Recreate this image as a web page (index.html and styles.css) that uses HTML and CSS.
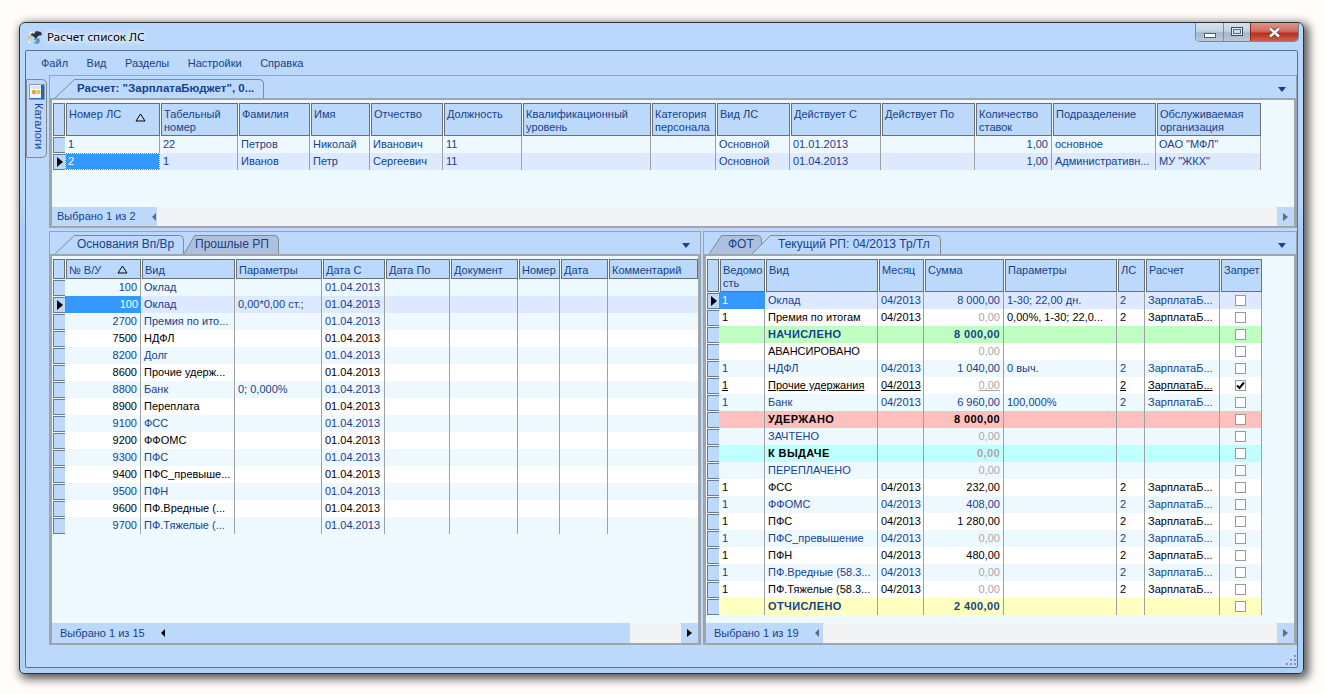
FILE: index.html
```html
<!DOCTYPE html>
<html lang="ru">
<head>
<meta charset="utf-8">
<title>Расчет список ЛС</title>
<link rel="stylesheet" href="styles.css">
</head>
<body>
<div class="window">
  <header class="titlebar">
    <svg class="appicon" width="17" height="16" viewBox="0 0 17 16">
      <path d="M1 8l5-2 1 2-4 2z" fill="#e9c75a"/>
      <path d="M5 3l3 2 2-3 5 1 1 3-4 1-2 3-3-3-2-1z" fill="#2c3440"/>
      <path d="M3 4l2-2 2 2-2 1z" fill="#f3f3f3"/>
      <path d="M8 10l5-1 1 3-2 3-5-1 2-1 2-1-3-1z" fill="#5f8fc4"/>
      <path d="M2 12l3 1-2 2z" fill="#eef4fb"/>
    </svg>
    <span class="wintitle">Расчет список ЛС</span>
    <div class="winbtns">
      <div class="wb wb-min"><i></i></div>
      <div class="wb wb-max"><i></i></div>
      <div class="wb wb-close">
        <svg width="13" height="11" viewBox="0 0 13 11"><path d="M2 1.5l9 8M11 1.5l-9 8" stroke="#4b4b4b" stroke-width="4"/><path d="M2 1.5l9 8M11 1.5l-9 8" stroke="#fff" stroke-width="2.4"/></svg>
      </div>
    </div>
  </header>
  <div class="form">
    <nav class="menu"><span>Файл</span><span>Вид</span><span>Разделы</span><span>Настройки</span><span>Справка</span></nav>
    <div class="work">
      <aside class="side">
        <div class="sidetab">
          <svg width="16" height="16" viewBox="0 0 16 16">
            <rect x=".5" y=".5" width="15" height="15" fill="#2f6fd0" stroke="#7f9fc8"/>
            <rect x="1" y="1" width="11" height="13" fill="#f4f7fb"/>
            <rect x="2" y="2" width="10" height="3" fill="#d9e6f6"/>
            <circle cx="5" cy="8" r="2.2" fill="#f0a030"/>
            <circle cx="9.5" cy="8" r="2.2" fill="#f3c040"/>
            <rect x="12" y="1" width="3" height="14" fill="#2a62c0"/>
          </svg>
          <span class="sidetext">Каталоги</span>
        </div>
      </aside>
      <main class="panes">
        <section class="pane pane-top">
          <div class="tabbar">
            <div class="tab active">
              <svg class="slope" width="20" height="19" viewBox="0 0 20 19"><path d="M0 19L20 0V19z" fill="#bcd9fb"/><path d="M0 19L20 0" stroke="#808a96" fill="none"/></svg>
              <span class="tablabel strong w-calc">Расчет: "ЗарплатаБюджет", 0...</span>
            </div>
            <i class="chev"></i>
          </div>
          <div class="gridbox g1">
            <div class="hrow tall">
              <div class="h"></div>
              <div class="h sort">Номер ЛС<svg class="sortmark" width="11" height="9" viewBox="0 0 11 9"><path d="M5.5 1L1 8h9z" fill="none" stroke="#000"/></svg></div>
              <div class="h">Табельный номер</div><div class="h">Фамилия</div><div class="h">Имя</div><div class="h">Отчество</div><div class="h">Должность</div><div class="h">Квалификационный уровень</div><div class="h">Категория персонала</div><div class="h">Вид ЛС</div><div class="h">Действует С</div><div class="h">Действует По</div><div class="h">Количество ставок</div><div class="h">Подразделение</div><div class="h">Обслуживаемая организация</div>
            </div>
            <div class="row blue"><i class="ind"></i><div class="c">1</div><div class="c">22</div><div class="c">Петров</div><div class="c">Николай</div><div class="c">Иванович</div><div class="c">11</div><div class="c"></div><div class="c"></div><div class="c">Основной</div><div class="c">01.01.2013</div><div class="c"></div><div class="c r">1,00</div><div class="c">основное</div><div class="c">ОАО "МФЛ"</div></div>
            <div class="row cur"><i class="ind on"></i><div class="c sel">2</div><div class="c">1</div><div class="c">Иванов</div><div class="c">Петр</div><div class="c">Сергеевич</div><div class="c">11</div><div class="c"></div><div class="c"></div><div class="c">Основной</div><div class="c">01.04.2013</div><div class="c"></div><div class="c r">1,00</div><div class="c">Административн...</div><div class="c">МУ "ЖКХ"</div></div>
            <div class="fill"></div>
            <div class="foot foot-top">
              <div class="footinfo fi-top"><span>Выбрано 1 из 2</span><i class="arr-l dim"></i></div>
              <div class="hatch"></div>
              <div class="footbtn"><i class="arr-r dim"></i></div>
            </div>
          </div>
        </section>
        <div class="lower">
          <section class="pane pane-left">
            <div class="tabbar">
              <div class="tab active">
                <svg class="slope" width="20" height="19" viewBox="0 0 20 19"><path d="M0 19L20 0V19z" fill="#bcd9fb"/><path d="M0 19L20 0" stroke="#808a96" fill="none"/></svg>
                <span class="tablabel l-base">Основания Вп/Вр</span>
              </div>
              <div class="tab inactive">
                <svg class="slope" width="11" height="19" viewBox="0 0 11 19"><path d="M0 19L11 0V19z" fill="#aec0dd"/><path d="M0 19L11 0" stroke="#808a96" fill="none"/></svg>
                <span class="tablabel l-past">Прошлые РП</span>
              </div>
              <i class="chev"></i>
            </div>
            <div class="gridbox g2">
              <div class="hrow">
                <div class="h"></div>
                <div class="h sort">№ В/У<svg class="sortmark" width="11" height="9" viewBox="0 0 11 9"><path d="M5.5 1L1 8h9z" fill="none" stroke="#000"/></svg></div>
                <div class="h">Вид</div><div class="h">Параметры</div><div class="h">Дата С</div><div class="h">Дата По</div><div class="h">Документ</div><div class="h">Номер</div><div class="h">Дата</div><div class="h">Комментарий</div>
              </div>
              <div class="row blue"><i class="ind"></i><div class="c r">100</div><div class="c">Оклад</div><div class="c"></div><div class="c">01.04.2013</div><div class="c"></div><div class="c"></div><div class="c"></div><div class="c"></div><div class="c"></div></div>
              <div class="row cur"><i class="ind on"></i><div class="c r sel">100</div><div class="c">Оклад</div><div class="c">0,00*0,00 ст.;</div><div class="c">01.04.2013</div><div class="c"></div><div class="c"></div><div class="c"></div><div class="c"></div><div class="c"></div></div>
              <div class="row blue"><i class="ind"></i><div class="c r">2700</div><div class="c">Премия по ито...</div><div class="c"></div><div class="c">01.04.2013</div><div class="c"></div><div class="c"></div><div class="c"></div><div class="c"></div><div class="c"></div></div>
              <div class="row plain"><i class="ind"></i><div class="c r">7500</div><div class="c">НДФЛ</div><div class="c"></div><div class="c">01.04.2013</div><div class="c"></div><div class="c"></div><div class="c"></div><div class="c"></div><div class="c"></div></div>
              <div class="row blue"><i class="ind"></i><div class="c r">8200</div><div class="c">Долг</div><div class="c"></div><div class="c">01.04.2013</div><div class="c"></div><div class="c"></div><div class="c"></div><div class="c"></div><div class="c"></div></div>
              <div class="row plain"><i class="ind"></i><div class="c r">8600</div><div class="c">Прочие удерж...</div><div class="c"></div><div class="c">01.04.2013</div><div class="c"></div><div class="c"></div><div class="c"></div><div class="c"></div><div class="c"></div></div>
              <div class="row blue"><i class="ind"></i><div class="c r">8800</div><div class="c">Банк</div><div class="c">0; 0,000%</div><div class="c">01.04.2013</div><div class="c"></div><div class="c"></div><div class="c"></div><div class="c"></div><div class="c"></div></div>
              <div class="row plain"><i class="ind"></i><div class="c r">8900</div><div class="c">Переплата</div><div class="c"></div><div class="c">01.04.2013</div><div class="c"></div><div class="c"></div><div class="c"></div><div class="c"></div><div class="c"></div></div>
              <div class="row blue"><i class="ind"></i><div class="c r">9100</div><div class="c">ФСС</div><div class="c"></div><div class="c">01.04.2013</div><div class="c"></div><div class="c"></div><div class="c"></div><div class="c"></div><div class="c"></div></div>
              <div class="row plain"><i class="ind"></i><div class="c r">9200</div><div class="c">ФФОМС</div><div class="c"></div><div class="c">01.04.2013</div><div class="c"></div><div class="c"></div><div class="c"></div><div class="c"></div><div class="c"></div></div>
              <div class="row blue"><i class="ind"></i><div class="c r">9300</div><div class="c">ПФС</div><div class="c"></div><div class="c">01.04.2013</div><div class="c"></div><div class="c"></div><div class="c"></div><div class="c"></div><div class="c"></div></div>
              <div class="row plain"><i class="ind"></i><div class="c r">9400</div><div class="c">ПФС_превыше...</div><div class="c"></div><div class="c">01.04.2013</div><div class="c"></div><div class="c"></div><div class="c"></div><div class="c"></div><div class="c"></div></div>
              <div class="row blue"><i class="ind"></i><div class="c r">9500</div><div class="c">ПФН</div><div class="c"></div><div class="c">01.04.2013</div><div class="c"></div><div class="c"></div><div class="c"></div><div class="c"></div><div class="c"></div></div>
              <div class="row plain"><i class="ind"></i><div class="c r">9600</div><div class="c">ПФ.Вредные (...</div><div class="c"></div><div class="c">01.04.2013</div><div class="c"></div><div class="c"></div><div class="c"></div><div class="c"></div><div class="c"></div></div>
              <div class="row blue"><i class="ind"></i><div class="c r">9700</div><div class="c">ПФ.Тяжелые (...</div><div class="c"></div><div class="c">01.04.2013</div><div class="c"></div><div class="c"></div><div class="c"></div><div class="c"></div><div class="c"></div></div>
              <div class="fill"></div>
              <div class="foot">
                <div class="footinfo fi-left"><span>Выбрано 1 из 15</span><i class="arr-l"></i></div>
                <div class="hatch"></div>
                <div class="footbtn"><i class="arr-r"></i></div>
              </div>
            </div>
          </section>
          <section class="pane pane-right">
            <div class="tabbar">
              <div class="tab inactive fot">
                <svg class="slope" width="13" height="19" viewBox="0 0 13 19"><path d="M0 19L13 0V19z" fill="#aec0dd"/><path d="M0 19L13 0" stroke="#808a96" fill="none"/></svg>
                <span class="tablabel l-fot">ФОТ</span>
              </div>
              <div class="tab active cur-tab">
                <svg class="slope" width="19" height="19" viewBox="0 0 19 19"><path d="M0 19L19 0V19z" fill="#bcd9fb"/><path d="M0 19L19 0" stroke="#808a96" fill="none"/></svg>
                <span class="tablabel l-cur">Текущий РП: 04/2013 Тр/Тл</span>
              </div>
              <i class="chev"></i>
            </div>
            <div class="gridbox g3">
              <div class="hrow tall">
                <div class="h"></div><div class="h">Ведомо сть</div><div class="h">Вид</div><div class="h">Месяц</div><div class="h">Сумма</div><div class="h">Параметры</div><div class="h">ЛС</div><div class="h">Расчет</div><div class="h">Запрет</div>
              </div>
              <div class="row cur"><i class="ind on"></i><div class="c sel">1</div><div class="c">Оклад</div><div class="c">04/2013</div><div class="c r">8 000,00</div><div class="c">1-30; 22,00 дн.</div><div class="c">2</div><div class="c">ЗарплатаБ...</div><div class="c ck"><i class="box"></i></div></div>
              <div class="row plain"><i class="ind"></i><div class="c">1</div><div class="c">Премия по итогам</div><div class="c">04/2013</div><div class="c r gr">0,00</div><div class="c">0,00%, 1-30; 22,0...</div><div class="c">2</div><div class="c">ЗарплатаБ...</div><div class="c ck"><i class="box"></i></div></div>
              <div class="row green"><i class="ind"></i><div class="c"></div><div class="c b">НАЧИСЛЕНО</div><div class="c"></div><div class="c r b">8 000,00</div><div class="c"></div><div class="c"></div><div class="c"></div><div class="c ck"><i class="box"></i></div></div>
              <div class="row plain"><i class="ind"></i><div class="c"></div><div class="c">АВАНСИРОВАНО</div><div class="c"></div><div class="c r gr">0,00</div><div class="c"></div><div class="c"></div><div class="c"></div><div class="c ck"><i class="box"></i></div></div>
              <div class="row blue"><i class="ind"></i><div class="c">1</div><div class="c">НДФЛ</div><div class="c">04/2013</div><div class="c r">1 040,00</div><div class="c">0 выч.</div><div class="c">2</div><div class="c">ЗарплатаБ...</div><div class="c ck"><i class="box"></i></div></div>
              <div class="row plain ul"><i class="ind"></i><div class="c">1</div><div class="c">Прочие удержания</div><div class="c">04/2013</div><div class="c r gr">0,00</div><div class="c"></div><div class="c">2</div><div class="c">ЗарплатаБ...</div><div class="c ck"><i class="box"><svg width="9" height="9" viewBox="0 0 9 9"><path d="M1 4.5l2.5 2.5L8 1.5" fill="none" stroke="#000" stroke-width="2"/></svg></i></div></div>
              <div class="row blue"><i class="ind"></i><div class="c">1</div><div class="c">Банк</div><div class="c">04/2013</div><div class="c r">6 960,00</div><div class="c">100,000%</div><div class="c">2</div><div class="c">ЗарплатаБ...</div><div class="c ck"><i class="box"></i></div></div>
              <div class="row pink"><i class="ind"></i><div class="c"></div><div class="c b">УДЕРЖАНО</div><div class="c"></div><div class="c r b">8 000,00</div><div class="c"></div><div class="c"></div><div class="c"></div><div class="c ck"><i class="box"></i></div></div>
              <div class="row blue"><i class="ind"></i><div class="c"></div><div class="c">ЗАЧТЕНО</div><div class="c"></div><div class="c r gr">0,00</div><div class="c"></div><div class="c"></div><div class="c"></div><div class="c ck"><i class="box"></i></div></div>
              <div class="row cyan"><i class="ind"></i><div class="c"></div><div class="c b">К ВЫДАЧЕ</div><div class="c"></div><div class="c r b gr">0,00</div><div class="c"></div><div class="c"></div><div class="c"></div><div class="c ck"><i class="box"></i></div></div>
              <div class="row blue"><i class="ind"></i><div class="c"></div><div class="c">ПЕРЕПЛАЧЕНО</div><div class="c"></div><div class="c r gr">0,00</div><div class="c"></div><div class="c"></div><div class="c"></div><div class="c ck"><i class="box"></i></div></div>
              <div class="row plain"><i class="ind"></i><div class="c">1</div><div class="c">ФСС</div><div class="c">04/2013</div><div class="c r">232,00</div><div class="c"></div><div class="c">2</div><div class="c">ЗарплатаБ...</div><div class="c ck"><i class="box"></i></div></div>
              <div class="row blue"><i class="ind"></i><div class="c">1</div><div class="c">ФФОМС</div><div class="c">04/2013</div><div class="c r">408,00</div><div class="c"></div><div class="c">2</div><div class="c">ЗарплатаБ...</div><div class="c ck"><i class="box"></i></div></div>
              <div class="row plain"><i class="ind"></i><div class="c">1</div><div class="c">ПФС</div><div class="c">04/2013</div><div class="c r">1 280,00</div><div class="c"></div><div class="c">2</div><div class="c">ЗарплатаБ...</div><div class="c ck"><i class="box"></i></div></div>
              <div class="row blue"><i class="ind"></i><div class="c">1</div><div class="c">ПФС_превышение</div><div class="c">04/2013</div><div class="c r gr">0,00</div><div class="c"></div><div class="c">2</div><div class="c">ЗарплатаБ...</div><div class="c ck"><i class="box"></i></div></div>
              <div class="row plain"><i class="ind"></i><div class="c">1</div><div class="c">ПФН</div><div class="c">04/2013</div><div class="c r">480,00</div><div class="c"></div><div class="c">2</div><div class="c">ЗарплатаБ...</div><div class="c ck"><i class="box"></i></div></div>
              <div class="row blue"><i class="ind"></i><div class="c">1</div><div class="c">ПФ.Вредные (58.3...</div><div class="c">04/2013</div><div class="c r gr">0,00</div><div class="c"></div><div class="c">2</div><div class="c">ЗарплатаБ...</div><div class="c ck"><i class="box"></i></div></div>
              <div class="row plain"><i class="ind"></i><div class="c">1</div><div class="c">ПФ.Тяжелые (58.3...</div><div class="c">04/2013</div><div class="c r gr">0,00</div><div class="c"></div><div class="c">2</div><div class="c">ЗарплатаБ...</div><div class="c ck"><i class="box"></i></div></div>
              <div class="row yellow"><i class="ind"></i><div class="c"></div><div class="c b">ОТЧИСЛЕНО</div><div class="c"></div><div class="c r b">2 400,00</div><div class="c"></div><div class="c"></div><div class="c"></div><div class="c ck"><i class="box"></i></div></div>
              <div class="fill"></div>
              <div class="foot">
                <div class="footinfo fi-right"><span>Выбрано 1 из 19</span><i class="arr-l dim"></i></div>
                <div class="hatch"></div>
                <div class="footbtn"><i class="arr-r dim"></i></div>
              </div>
            </div>
          </section>
        </div>
      </main>
    </div>
    <footer class="status">
      <svg width="12" height="12" viewBox="0 0 12 12" fill="#8a97a8">
        <rect x="9" y="1" width="2" height="2"/><rect x="5" y="5" width="2" height="2"/><rect x="9" y="5" width="2" height="2"/><rect x="1" y="9" width="2" height="2"/><rect x="5" y="9" width="2" height="2"/><rect x="9" y="9" width="2" height="2"/>
      </svg>
    </footer>
  </div>
</div>
</body>
</html>
```
FILE: styles.css
```css
* { box-sizing: border-box; }
html, body { margin: 0; height: 100%; overflow: hidden; }
body {
  background: #fffcfa;
  font: 11px/13px "Liberation Sans", "Noto Sans", sans-serif;
  color: #15428b;
}
i { display: block; font-style: normal; }

.window {
  width: 1285px;
  height: 652px;
  margin: 22px 0 0 19px;
  padding: 0 5px 5px;
  display: flex;
  flex-direction: column;
  border: 1px solid #2e3238;
  border-radius: 6px 6px 5px 5px;
  background: linear-gradient(180deg, #b8d7fa 0, #b7d6fa 28%, #a9cdf6 32%, #aed1f7 100%);
  box-shadow: 3px 3px 10px 2px rgba(0, 0, 0, .65);
}

.titlebar { height: 27px; display: flex; align-items: flex-start; flex: none; }
.appicon { margin: 6px 4px 0 1px; flex: none; }
.wintitle {
  margin-top: 7px;
  color: #000;
  font: 11.6px/14px "Noto Sans", sans-serif;
  text-shadow: 0 0 6px #fff, 0 0 8px #fff, 0 0 10px #fff;
}
.winbtns {
  margin-left: auto;
  margin-right: -1px;
  display: flex;
  height: 19px;
  border: 1px solid #77889d;
  border-top: 0;
  border-radius: 0 0 5px 5px;
  overflow: hidden;
}
.wb { display: flex; align-items: center; justify-content: center; height: 100%; }
.wb-min { width: 28px; border-right: 1px solid #7f8fa3; background: linear-gradient(180deg, #d5e1ee 0, #c4d3e3 45%, #a5b7cb 55%, #b9c9da 100%); }
.wb-max { width: 27px; border-right: 1px solid #8a2c22; background: linear-gradient(180deg, #d5e1ee 0, #c4d3e3 45%, #a5b7cb 55%, #b9c9da 100%); }
.wb-close { width: 47px; background: linear-gradient(180deg, #dd9487 0, #cf6f60 45%, #b5301f 58%, #cf5f4e 100%); }
.wb-min i { width: 12px; height: 5px; margin-top: 6px; background: #fff; border: 1px solid #4f5d6e; }
.wb-max i { width: 12px; height: 9px; margin-top: -1px; background: #cfdbe8; border: 1px solid #3f4c5c; box-shadow: inset 0 0 0 1px #e3ebf3, inset 0 0 0 2px #5d6c7e; }

.form {
  flex: 1;
  min-height: 0;
  display: flex;
  flex-direction: column;
  background: #bcd9fb;
  border: 1px solid #5f7187;
  border-radius: 2px;
}
.menu { height: 24px; flex: none; display: flex; gap: 18.5px; padding: 5px 0 0 15px; line-height: 14px; }
.work { flex: 1; min-height: 0; display: flex; }
.side { width: 23px; flex: none; padding-top: 4px; }
.sidetab {
  width: 21px;
  height: 79px;
  padding: 4px 0 0 2px;
  border: 1px solid #808a96;
  border-radius: 0 5px 5px 0;
  background: #bcd9fb;
  display: flex;
  flex-direction: column;
}
.sidetext { writing-mode: vertical-rl; margin: 3px 0 0 1px; line-height: 14px; }

.panes { flex: 1; min-width: 0; display: flex; flex-direction: column; gap: 3px; }
.pane { display: flex; flex-direction: column; border: 1px solid #9aa3ad; border-bottom: 0; min-width: 0; }
.pane-top { height: 153px; flex: none; }
.lower { height: 414px; flex: none; display: flex; gap: 2px; }
.pane-left { width: 652px; flex: none; }
.pane-right { flex: 1; }

.tabbar { height: 22px; flex: none; display: flex; align-items: flex-end; padding-left: 5px; }
.tab { display: flex; height: 19px; position: relative; }
.slope { display: block; flex: none; }
.tablabel {
  display: block;
  height: 19px;
  padding-top: 1px;
  font-size: 12px;
  line-height: 15px;
  border: 1px solid #808a96;
  border-left: 0;
  border-bottom: 0;
  border-radius: 0 5px 0 0;
  white-space: nowrap;
}
.active .tablabel { background: #bcd9fb; }
.inactive .tablabel { background: #aec0dd; }
.tablabel.strong { font-weight: 700; font-size: 11.5px; }
.w-calc { width: 189px; padding-left: 2px; }
.l-base { width: 109px; padding-left: 2px; }
.l-past { width: 84px; }
.l-fot { width: 40px; padding-left: 6px; }
.l-cur { width: 170px; padding-left: 7px; }
.inactive { z-index: 0; }
.active { z-index: 1; }
.cur-tab { margin-left: -10px; }
.chev {
  margin: 0 10px 6px auto;
  width: 0;
  height: 0;
  border: 4px solid transparent;
  border-top: 5px solid #15428b;
  border-bottom: 0;
  align-self: flex-end;
}

.gridbox {
  flex: 1;
  min-height: 0;
  display: flex;
  flex-direction: column;
  border: 2px solid #a3a6a9;
  padding-top: 3px;
  background: #eef9ff;
  overflow: hidden;
}
.hrow, .row { display: grid; flex: none; padding-left: 1px; }
.hrow { height: 20px; }
.hrow.tall { height: 33px; }
.row { height: 17px; }
.g1 .hrow { grid-template-columns: 13px 95px 78px 72px 60px 73px 79px 129px 65px 74px 91px 94px 77px 104px 105px; }
.g1 .row { grid-template-columns: 12px 95px 78px 72px 60px 73px 79px 129px 65px 74px 91px 94px 77px 104px 105px; }
.g2 .hrow { grid-template-columns: 13px 76px 94px 87px 63px 65px 68px 42px 48px 90px; }
.g2 .row { grid-template-columns: 12px 76px 94px 87px 63px 65px 68px 42px 48px 91px; }
.g3 .hrow { grid-template-columns: 13px 46px 113px 46px 80px 113px 28px 75px 42px; }
.g3 .row { grid-template-columns: 12px 46px 113px 46px 80px 113px 28px 75px 42px; }

.h {
  position: relative;
  margin-right: 1px;
  padding: 4px 1px 0 2px;
  border: 1px solid #6b7077;
  background: #bcd9fb;
  overflow: hidden;
}
.sortmark { position: absolute; right: 13px; top: 9px; }
.g2 .sortmark { top: 5px; right: 12px; }

.c {
  padding: 0 3px;
  line-height: 16px;
  white-space: nowrap;
  overflow: hidden;
  background: var(--bg);
  border-right: 1px solid #a0a0a0;
}
.r { text-align: right; }
.b { font-weight: 700; letter-spacing: .4px; }
.c.gr { color: #a8a8a8; }
.ck { display: flex; align-items: center; justify-content: center; }
.box { width: 11px; height: 11px; background: #fff; border: 1px solid #9a9a9a; display: flex; align-items: center; justify-content: center; }

.blue { --bg: #eef9ff; }
.plain { --bg: #fff; color: #000; }
.cur { --bg: #dce9ff; }
.green { --bg: #bfffbf; }
.pink { --bg: #ffbfbf; color: #000; }
.cyan { --bg: #bfffff; color: #000; }
.yellow { --bg: #ffffbf; }
.ul .c { text-decoration: underline; }
.c.sel { background: #3399ff; color: #fff; outline: 1px dotted #fff; outline-offset: -1px; border-right: 0; }
.g3 .c.sel, .g2 .c.sel { outline: 0; }

.ind {
  width: 13px;
  height: 16px;
  margin-top: 1px;
  background: #bcd9fb;
  border: 1px solid #6d7a8a;
  display: flex;
  align-items: center;
  justify-content: center;
}
.ind.on::after {
  content: "";
  border-left: 6px solid #000;
  border-top: 5px solid transparent;
  border-bottom: 5px solid transparent;
}

.fill { flex: 1; min-height: 0; }
.foot { height: 20px; flex: none; display: flex; }
.foot-top { height: 19px; }
.footinfo { display: flex; align-items: center; background: #bcd9fb; flex: none; white-space: nowrap; }
.fi-top { width: 105px; padding-left: 5px; }
.fi-left { width: 578px; padding-left: 8px; }
.fi-right { width: 117px; padding-left: 8px; }
.hatch {
  flex: 1;
  background: repeating-conic-gradient(#fafafa 0 25%, #e9edf0 0 50%) 0 0 / 2px 2px;
}
.footbtn { width: 17px; flex: none; background: #bcd9fb; display: flex; align-items: center; justify-content: center; }
.arr-l, .arr-r { width: 0; height: 0; border-top: 4px solid transparent; border-bottom: 4px solid transparent; }
.arr-l { border-right: 4px solid #000; margin-left: 16px; }
.arr-r { border-left: 5px solid #000; }
.arr-l.dim { border-right-color: #5f6b78; }
.arr-r.dim { border-left-color: #5f6b78; }

.status { height: 22px; flex: none; display: flex; justify-content: flex-end; align-items: flex-end; padding: 0 0 1px; }
```
